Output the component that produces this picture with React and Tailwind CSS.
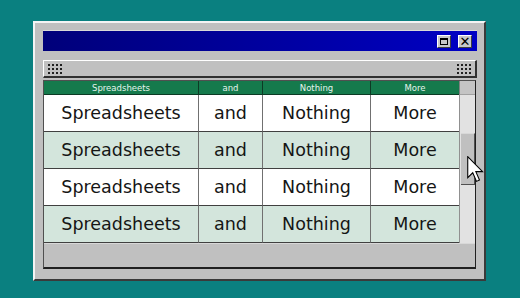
import React from 'react';

const COLS = ['Spreadsheets', 'and', 'Nothing', 'More'];
const ROWS = [0, 1, 2, 3];

const Grip = () => (
  <div className="grid grid-cols-4 gap-x-[2px] gap-y-[2px]">
    {Array.from({ length: 12 }, (_, i) => (
      <div key={i} className="w-[2px] h-[2px] bg-[#202020]" />
    ))}
  </div>
);

const TitleButton = ({ children }) => (
  <div className="w-[14px] h-[13px] bg-[#c8c8c8] border-t border-l border-t-white border-l-white border-b border-r border-b-[#404040] border-r-[#404040] flex items-center justify-center">
    {children}
  </div>
);

const Cursor = () => (
  <svg
    className="absolute left-[467px] top-[156px]"
    width="17"
    height="27"
    viewBox="0 0 12.5 20"
  >
    <path
      d="M0.5 0.5 L0.5 16 L4.2 12.4 L7 18.8 L9.2 17.8 L6.5 11.6 L11.5 11.6 Z"
      fill="#ffffff"
      stroke="#000000"
      strokeWidth="0.8"
      strokeLinejoin="miter"
    />
  </svg>
);

export default function App() {
  return (
    <div
      className="relative w-[520px] h-[298px] bg-[#0a8080] pt-[21px] pl-[33px] overflow-hidden"
      style={{ fontFamily: '"DejaVu Sans", Verdana, sans-serif' }}
    >
      {/* Window */}
      <div className="w-[453px] h-[260px] bg-[#c0c0c0] border-t-2 border-l-2 border-t-[#f4f4f4] border-l-[#f4f4f4] border-r-2 border-b-2 border-r-[#3a3a3a] border-b-[#3a3a3a] pl-[8px] pr-[7px] pt-[7px] flex flex-col">
        {/* Title bar */}
        <div className="h-[21px] w-[434px] bg-linear-to-r from-[#00007a] to-[#0000c4] flex items-center justify-end gap-[7px] pr-[5px] border-t border-t-[#d8d8d8]">
          <TitleButton>
            <div className="w-[8px] h-[7px] border border-black border-t-2" />
          </TitleButton>
          <TitleButton>
            <span className="text-[13px] leading-none text-black font-bold">✕</span>
          </TitleButton>
        </div>

        {/* Toolbar */}
        <div className="mt-[9px] h-[18px] w-[434px] bg-[#c0c0c0] border-t border-l border-t-white border-l-white border-b-2 border-r-2 border-b-[#303030] border-r-[#303030] flex items-center justify-between px-[4px]">
          <Grip />
          <Grip />
        </div>

        {/* Sheet panel */}
        <div className="mt-[2px] w-[433px] border border-[#505050] border-r-[#202020] border-b-2 border-b-[#202020] flex flex-col">
          <div className="flex">
            {/* Table */}
            <div className="grid grid-cols-[155px_64px_108px_88px]">
              {COLS.map((c, i) => (
                <div
                  key={c}
                  className={`h-[14px] bg-[#157a4c] text-[#e6f4ec] text-[8.5px] leading-[14px] text-center border-b border-b-[#0c3a24] ${
                    i < 3 ? 'border-r border-r-[#0c3a24]' : ''
                  }`}
                >
                  {c}
                </div>
              ))}
              {ROWS.map((r) =>
                COLS.map((c, i) => (
                  <div
                    key={`${r}-${c}`}
                    className={`h-[37px] flex items-center justify-center text-[17.5px] text-[#151515] border-b border-b-[#404040] ${
                      i < 3 ? 'border-r border-r-[#707070]' : ''
                    } ${r % 2 === 0 ? 'bg-white' : 'bg-[#d3e5dc]'}`}
                  >
                    {c}
                  </div>
                ))
              )}
            </div>

            {/* Scrollbar */}
            <div className="w-[16px] flex flex-col">
              <div className="h-[14px] bg-[#c4c4c4] border-l border-l-[#808080] border-b border-b-[#a0a0a0]" />
              <div className="flex-1 bg-[#e2e2e2] border-l border-l-[#909090] pt-[38px]">
                <div className="h-[52px] ml-[1px] bg-[#c0c0c0] border-r border-r-[#505050] border-b border-b-[#505050] border-t border-t-[#d8d8d8]" />
              </div>
            </div>
          </div>

          {/* Bottom bar */}
          <div className="h-[24px] bg-[#c0c0c0] border-t border-t-[#d8d8d8]" />
        </div>
      </div>

      <Cursor />
    </div>
  );
}
